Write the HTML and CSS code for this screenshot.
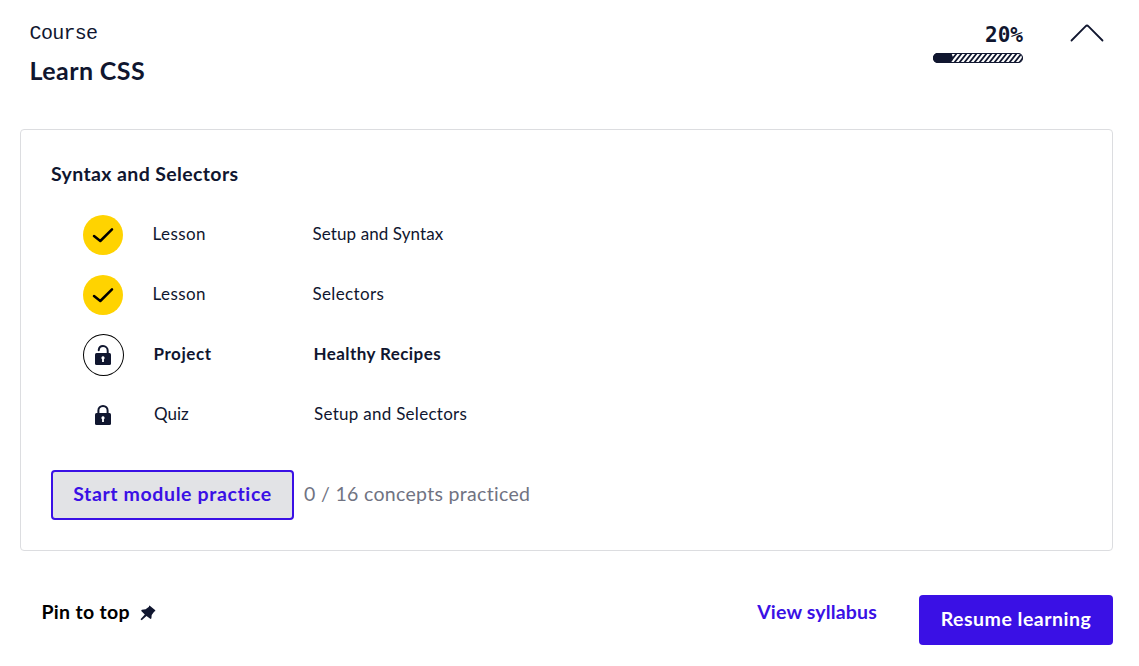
FILE: index.html
```html
<!DOCTYPE html>
<html lang="en">
<head>
<meta charset="utf-8">
<title>Learn CSS</title>
<link rel="stylesheet" href="styles.css">
</head>
<body>
<header class="header">
  <div class="heading">
    <div class="kind">Course</div>
    <h1 class="title">Learn CSS</h1>
  </div>
  <div class="progress">
    <div class="percent">20%</div>
    <svg class="bar" width="90" height="10" viewBox="0 0 90 10">
      <defs>
        <pattern id="stripes" width="5" height="10" patternUnits="userSpaceOnUse">
          <path d="M-4 10L4 0M1 10L9 0M-9 10L-1 0" stroke="#10162f" stroke-width="1.8"/>
        </pattern>
      </defs>
      <rect x=".5" y=".5" width="89" height="9" rx="4.5" fill="#fff"/>
      <rect x=".5" y=".5" width="89" height="9" rx="4.5" fill="url(#stripes)" stroke="#10162f" stroke-width="1.2"/>
      <rect width="20" height="10" rx="5" fill="#10162f"/>
    </svg>
  </div>
  <svg class="chevron" width="34" height="20" viewBox="0 0 34 20"><path d="M1.500 17.500L15.500 3.300Q17 1.800 18.500 3.300L32.500 17.500" fill="none" stroke="#10162f" stroke-width="1.8" stroke-linecap="round"/></svg>
</header>
<main class="card">
  <h2 class="module">Syntax and Selectors</h2>
  <ul class="items">
    <li class="item">
      <span class="badge done"><svg width="40" height="40" viewBox="0 0 40 40"><path d="M11 21L17.300 26L29 14.300" fill="none" stroke="#000" stroke-width="2.500" stroke-linecap="round" stroke-linejoin="round"/></svg></span>
      <span class="type lesson">Lesson</span><span class="name setup-syntax">Setup and Syntax</span>
    </li>
    <li class="item">
      <span class="badge done"><svg width="40" height="40" viewBox="0 0 40 40"><path d="M11 21L17.300 26L29 14.300" fill="none" stroke="#000" stroke-width="2.500" stroke-linecap="round" stroke-linejoin="round"/></svg></span>
      <span class="type lesson">Lesson</span><span class="name selectors">Selectors</span>
    </li>
    <li class="item current">
      <span class="badge open"><svg width="16" height="20" viewBox="0 0 16 20"><path d="M3.700 5.200C4 2.600 5.700 1 8 1C10.600 1 12.700 3 12.700 5.700V9" fill="none" stroke="#10162f" stroke-width="2" stroke-linecap="round"/><rect y="8" width="16" height="12" rx="1.500" fill="#10162f"/><path d="M8 11.200a1.700 1.700 0 0 0-.9 3.100V17h1.800v-2.700A1.700 1.700 0 0 0 8 11.200z" fill="#fff"/></svg></span>
      <span class="type project">Project</span><span class="name recipes">Healthy Recipes</span>
    </li>
    <li class="item locked">
      <span class="badge"><svg width="16" height="20" viewBox="0 0 16 20"><path d="M3.400 9V5.600C3.400 2.900 5.400 1 8 1S12.600 2.900 12.600 5.600V9" fill="none" stroke="#10162f" stroke-width="2"/><rect y="8" width="16" height="12" rx="1.500" fill="#10162f"/><path d="M8 11.200a1.700 1.700 0 0 0-.9 3.100V17h1.800v-2.700A1.700 1.700 0 0 0 8 11.200z" fill="#fff"/></svg></span>
      <span class="type quiz">Quiz</span><span class="name setup-selectors">Setup and Selectors</span>
    </li>
  </ul>
  <div class="practice">
    <button class="button outline"><span>Start module practice</span></button>
    <span class="count">0 / 16 concepts practiced</span>
  </div>
</main>
<footer class="footer">
  <div class="pin"><span class="pin-label">Pin to top</span>
    <svg class="pin-icon" width="16" height="16" viewBox="0 0 16 16"><path d="M9.500.5L15.300 5.200Q15.500 6.300 14.300 6.600L11.700 10L11.400 13.300Q10.800 14.400 9.900 13.500L6.500 10.900L1.700 15.300L.5 14.300L4.800 9.500L1.500 6.200Q.7 5.300 1.900 4.700L5.600 4.300L9 1.800Q8.700 1 9.500.5Z" fill="#10162f"/></svg>
  </div>
  <a class="syllabus">View syllabus</a>
  <button class="button filled"><span>Resume learning</span></button>
</footer>
</body>
</html>
```
FILE: styles.css
```css
* { box-sizing: border-box; }
body {
  margin: 0;
  padding: 20px 26px 21px 20px;
  background: #fff;
  color: #10162f;
  font-family: Lato, "Open Sans", sans-serif;
  font-variant-ligatures: none;
}
h1, h2, ul { margin: 0; padding: 0; }
.header { display: flex; align-items: flex-start; height: 109px; padding: 0 9px 0 9.600px; }
.heading { flex: 1; }
.kind { padding-top: 1px; font: 20px/26px "Liberation Mono", monospace; letter-spacing: -.7px; }
.title { margin-top: 6px; font-size: 25px; line-height: 34px; font-weight: 700; letter-spacing: .4px; }
.progress { display: flex; flex-direction: column; align-items: flex-end; width: 90px; }
.percent { margin-top: 3px; font: bold 21px/24px "DejaVu Sans Mono", monospace; }
.bar { display: block; margin-top: 6px; }
.chevron { margin: 3px 0 0 47px; }
.card { height: 422px; padding: 29px 30px 30px; border: 1px solid #dcdde0; border-radius: 4px; }
.module { font-size: 19.500px; line-height: 30px; font-weight: 700; letter-spacing: .37px; }
.items { display: grid; gap: 20px; margin-top: 26px; padding-left: 32px; list-style: none; }
.item { display: flex; align-items: center; height: 40px; font-size: 17px; line-height: 24px; }
.badge { display: flex; align-items: center; justify-content: center; flex: none; width: 40px; height: 40px; border-radius: 50%; }
.badge + .type { margin-left: 29.5px; }
.done { background: #ffd300; }
.open { width: 41px; height: 42px; padding-right: 1px; border: 1px solid #000; }
.locked .badge + .type { margin-left: 31px; }
.type { width: 160px; }
.lesson { letter-spacing: .4px; }
.setup-syntax { letter-spacing: .1px; }
.selectors { letter-spacing: .35px; }
.project { letter-spacing: .55px; }
.recipes { letter-spacing: .42px; }
.setup-selectors { letter-spacing: .28px; }
.type, .name { position: relative; top: -1px; }
.current { font-weight: 700; }
.practice { display: flex; align-items: center; gap: 10px; margin-top: 35px; }
.button { height: 50px; padding: 0 0 2px; border-radius: 4px; font: bold 19.500px/24px Lato, sans-serif; }
.outline { width: 243px; border: 2px solid #3a10e5; background: #e2e3e6; color: #3a10e5; letter-spacing: .62px; }
.count { padding-bottom: 3px; font-size: 19.500px; color: #707382; letter-spacing: .32px; }
.footer { display: flex; align-items: flex-start; height: 94px; padding: 44px 0 0 21.500px; font-size: 19.500px; line-height: 34px; font-weight: 700; }
.pin { display: flex; align-items: center; flex: 1; gap: 10px; color: #000; }
.pin-label { letter-spacing: .3px; }
.pin-icon { margin-top: 1px; }
.syllabus { margin-right: 42px; color: #3a10e5; letter-spacing: .17px; }
.filled { width: 194px; border: 0; background: #3a10e5; color: #fff; letter-spacing: .5px; }
```
